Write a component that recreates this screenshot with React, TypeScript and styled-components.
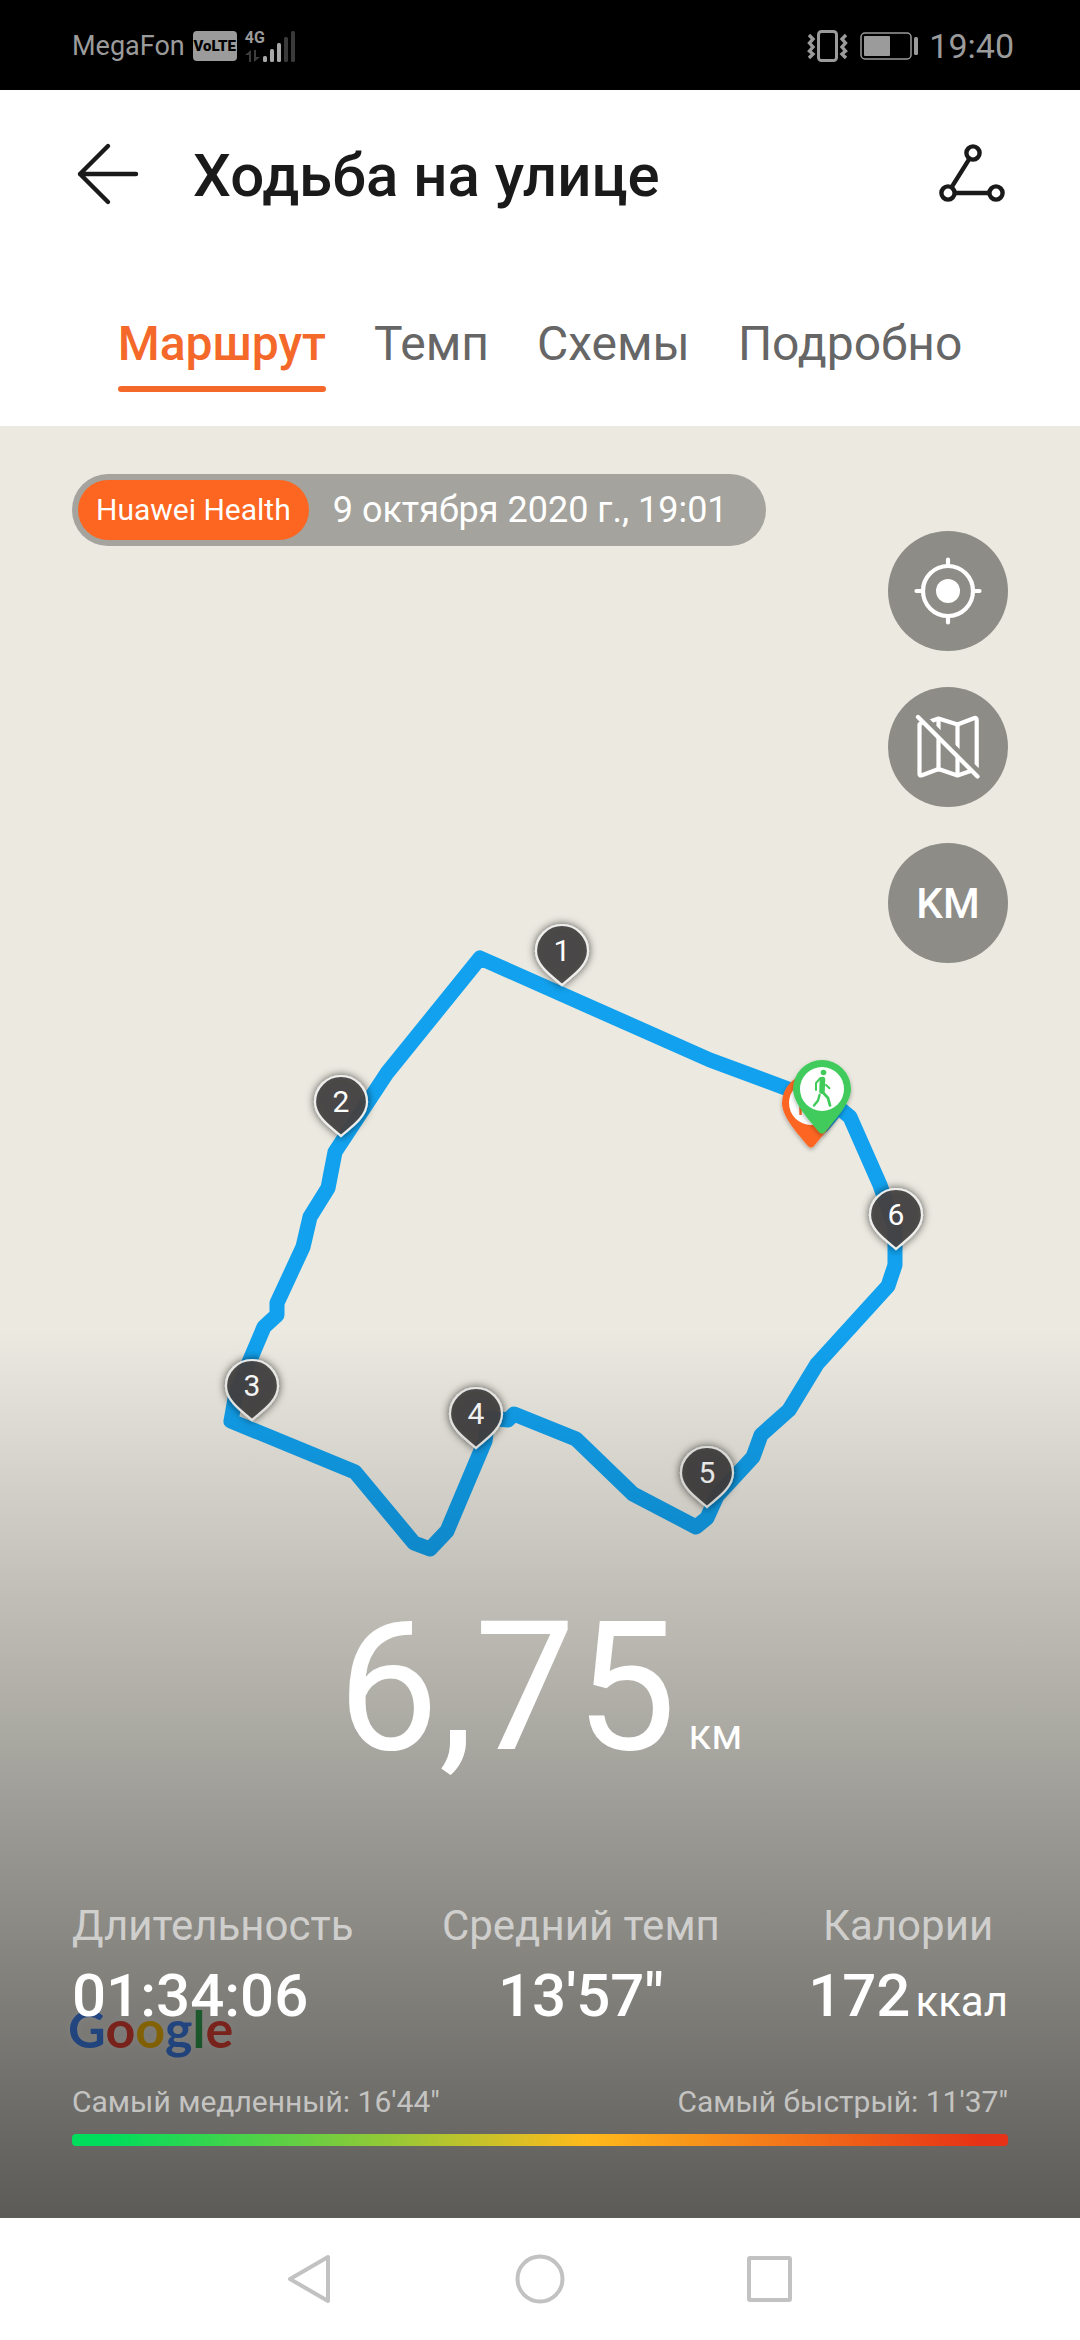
import React, { useState } from "react";
import styled, { createGlobalStyle } from "styled-components";

const GlobalStyle = createGlobalStyle`
  *, *::before, *::after { box-sizing: border-box; }
  body {
    margin: 0;
    background: #ffffff;
    font-family: Roboto, "Noto Sans", sans-serif;
  }
  button {
    border: 0;
    padding: 0;
    background: none;
    font: inherit;
    color: inherit;
    cursor: pointer;
  }
  svg { display: block; }
`;

const Screen = styled.div`
  display: flex;
  flex-direction: column;
  min-height: 100vh;
`;

/* Status bar */

const StatusBar = styled.div`
  display: flex;
  justify-content: space-between;
  align-items: center;
  height: 90px;
  padding: 2px 66px 0 72px;
  background: #000000;
  color: #9b9b9b;
`;

const StatusGroup = styled.div<{ $gap: number }>`
  display: flex;
  align-items: center;
  gap: ${(p) => p.$gap}px;
`;

const Carrier = styled.span`
  font-size: 27px;
  line-height: 32px;
`;

const VolteBadge = styled.span`
  display: flex;
  align-items: center;
  justify-content: center;
  width: 44px;
  height: 30px;
  border-radius: 4px;
  background: #9b9b9b;
  color: #000000;
  font-size: 15px;
  font-weight: 900;
`;

const Signal = styled.div`
  display: grid;
  grid-template-columns: 18px 32px;
  align-items: end;
  height: 32px;
`;

const Network = styled.div`
  display: flex;
  flex-direction: column;
  gap: 4px;
  font-size: 16px;
  font-weight: 700;
  line-height: 16px;
`;

const Clock = styled.span`
  font-size: 34px;
  line-height: 40px;
`;

/* Header */

const AppBar = styled.header`
  display: flex;
  align-items: center;
  gap: 49px;
  height: 168px;
  padding: 0 72px;
  color: #1a1a1a;
`;

const IconButton = styled.button`
  width: 72px;
  height: 72px;
`;

const Title = styled.h1`
  flex: 1;
  margin: 0;
  padding-top: 4px;
  font-size: 60px;
  line-height: 72px;
  font-weight: 500;
`;

const Tabs = styled.nav`
  display: flex;
  justify-content: center;
  gap: 48px;
  padding: 58px 48px 34px;
`;

const Tab = styled.button<{ $active: boolean }>`
  display: flex;
  flex-direction: column;
  gap: 14px;
  font-size: 48px;
  line-height: 56px;
  font-weight: ${(p) => (p.$active ? 500 : 400)};
  color: ${(p) => (p.$active ? "#f4692a" : "#666666")};

  &::after {
    content: "";
    width: 100%;
    height: 6px;
    border-radius: 3px;
    background: ${(p) => (p.$active ? "#f4692a" : "transparent")};
  }
`;

/* Map */

const MapArea = styled.main`
  position: relative;
  flex: 1;
  display: flex;
  flex-direction: column;
  justify-content: space-between;
  background: #ebe9e0;
  overflow: hidden;
`;

const MapLayer = styled.div`
  position: absolute;
  inset: 0;
`;

const RouteCanvas = styled.svg`
  width: 100%;
  height: 100%;
`;

const GoogleMark = styled.div`
  position: absolute;
  left: 68px;
  bottom: 158px;
  font-family: Lato, sans-serif;
  font-size: 52px;
  line-height: 64px;
  font-weight: 700;
  filter: drop-shadow(0 0 4px rgba(255, 255, 255, 0.6));
`;

const Letter = styled.span<{ $color: string }>`
  color: ${(p) => p.$color};
`;

const MapTop = styled.div`
  position: relative;
  display: flex;
  justify-content: space-between;
  align-items: flex-start;
  padding: 48px 72px 0;
`;

const SourceChip = styled.div`
  display: flex;
  align-items: center;
  gap: 24px;
  padding: 6px 38px 6px 6px;
  border-radius: 36px;
  background: #a4a39d;
  color: #ffffff;
  font-size: 36px;
  line-height: 42px;
`;

const Source = styled.span`
  padding: 0 18px;
  border-radius: 30px;
  background: #fc6620;
  font-size: 30px;
  line-height: 60px;
`;

const Controls = styled.div`
  display: flex;
  flex-direction: column;
  gap: 36px;
  padding-top: 57px;
`;

const RoundButton = styled.button`
  display: flex;
  align-items: center;
  justify-content: center;
  width: 120px;
  height: 120px;
  border-radius: 50%;
  background: #8d8c87;
  color: #ffffff;
  font-size: 42px;
  font-weight: 500;
`;

/* Summary */

const Summary = styled.section`
  position: relative;
  display: flex;
  flex-direction: column;
  padding: 250px 72px 72px;
  background: linear-gradient(rgba(0, 0, 0, 0), rgba(0, 0, 0, 0.61));
  color: #ffffff;
`;

const Distance = styled.div`
  display: flex;
  justify-content: center;
  align-items: baseline;
  gap: 12px;
  margin-bottom: 106px;
  font-size: 180px;
  line-height: 216px;
`;

const Unit = styled.span`
  font-size: 42px;
  line-height: 48px;
  font-weight: 400;
`;

const Stats = styled.dl`
  display: flex;
  justify-content: space-between;
  margin: 0 0 52px;
`;

const Stat = styled.div<{ $align: string }>`
  display: flex;
  flex-direction: column;
  gap: 10px;
  align-items: ${(p) => p.$align};
`;

const StatLabel = styled.dt`
  color: rgba(255, 255, 255, 0.6);
  font-size: 42px;
  line-height: 48px;
`;

const StatValue = styled.dd`
  display: flex;
  align-items: baseline;
  gap: 5px;
  margin: 0;
  font-size: 60px;
  line-height: 72px;
  font-weight: 500;
`;

const PaceRange = styled.div`
  display: flex;
  justify-content: space-between;
  margin-bottom: 14px;
  color: rgba(255, 255, 255, 0.6);
  font-size: 30px;
  line-height: 36px;
`;

const PaceBar = styled.div`
  height: 12px;
  border-radius: 4px;
  background: linear-gradient(90deg, #00dc5c 4%, #ffba1c 55%, #e63216 97%);
`;

/* Navigation bar */

const NavBar = styled.footer`
  display: flex;
  justify-content: center;
  align-items: center;
  gap: 180px;
  height: 122px;
  background: #ffffff;
`;

const NavButton = styled.button`
  width: 50px;
  height: 50px;
`;

const ROUTE =
  "M822 1126 L838 1107 L850 1117 L880 1185 L895 1228 L895 1265 L888 1286 L817 1364 L789 1410 L761 1435 L753 1457 L717 1496 L707 1518 L696 1527 L633 1494 L576 1439 L514 1414 L508 1420 L488 1418 L485 1441 L447 1531 L430 1549 L414 1543 L355 1472 L231 1421 L236 1393 L250 1360 L264 1327 L277 1315 L277 1303 L303 1247 L310 1217 L328 1188 L335 1152 L387 1073 L480 958 L710 1060 L815 1099";

const SPLITS = [
  { km: 1, x: 562, y: 951 },
  { km: 2, x: 341, y: 1102 },
  { km: 3, x: 252, y: 1386 },
  { km: 4, x: 476, y: 1414 },
  { km: 5, x: 707, y: 1473 },
  { km: 6, x: 896, y: 1215 },
];

const TABS = ["Маршрут", "Темп", "Схемы", "Подробно"];

const GOOGLE: [string, string][] = [
  ["G", "#4285f4"],
  ["o", "#ea4335"],
  ["o", "#fbbc05"],
  ["g", "#4285f4"],
  ["l", "#34a853"],
  ["e", "#ea4335"],
];

function SplitPin({ km, x, y }: { km: number; x: number; y: number }) {
  return (
    <g transform={`translate(${x} ${y})`}>
      <path
        d="M0 34 C-7 27 -26 16 -26 0 A26 26 0 0 1 26 0 C26 16 7 27 0 34 Z"
        fill="#464442"
        fillOpacity="0.9"
        stroke="#eeeeec"
        strokeWidth="2.2"
        filter="url(#pin-shadow)"
      />
      <text y="10" textAnchor="middle" fontSize="30" fill="#ffffff">
        {km}
      </text>
    </g>
  );
}

function WalkPin({ x, y, color }: { x: number; y: number; color: string }) {
  return (
    <g transform={`translate(${x} ${y})`}>
      <path
        d="M-3 43 C-10 34 -29 15 -29 0 A29 29 0 0 1 29 0 C29 15 10 34 3 43 Q0 46 -3 43 Z"
        fill={color}
        filter="url(#soft-shadow)"
      />
      <circle r="22" fill="#ffffff" />
      <circle cx="1.5" cy="-16.5" r="2.8" fill={color} />
      <g fill="none" stroke={color} strokeLinecap="round" strokeLinejoin="round">
        <path d="M0.5 -9.5 L0 2" strokeWidth="5.6" />
        <path d="M-1.5 -11 L-6 -6 L-6 1" strokeWidth="2" />
        <path d="M4 -4 L7.5 -0.8" strokeWidth="2" />
        <path d="M0.5 3 L6 9 L8 16.5" strokeWidth="2.8" />
        <path d="M-2.5 6 L-4 11.5 L-8 16.5" strokeWidth="2.4" />
      </g>
    </g>
  );
}

function FinishPin({ x, y }: { x: number; y: number }) {
  return (
    <g transform={`translate(${x} ${y})`}>
      <path
        d="M-3 43 C-10 34 -29 15 -29 0 A29 29 0 0 1 29 0 C29 15 10 34 3 43 Q0 46 -3 43 Z"
        fill="#fc6620"
        filter="url(#soft-shadow)"
      />
      <circle r="22" fill="#ffffff" />
      <path d="M-10.500 -10 V12" stroke="#fc6620" strokeWidth="2.400" />
    </g>
  );
}

export default function App() {
  const [active, setActive] = useState(TABS[0]);

  return (
    <>
      <GlobalStyle />
      <Screen>
        <StatusBar>
          <StatusGroup $gap={8}>
            <Carrier>MegaFon</Carrier>
            <VolteBadge>VoLTE</VolteBadge>
            <Signal>
              <Network>
                <span>4G</span>
                <svg width="16" height="12" viewBox="0 0 16 12" fill="#3d3d3d">
                  <path d="M6 0 V12 H4 V5 H0 Z M9 0 V12 L15 7 H11 V0 Z" />
                </svg>
              </Network>
              <svg width="32" height="32" viewBox="0 0 32 32">
                <g fill="#a8a8a8">
                  <rect x="0" y="26" width="4" height="6" rx="1.5" />
                  <rect x="7" y="19" width="4" height="13" rx="1.5" />
                  <rect x="14" y="13" width="4" height="19" rx="1.5" />
                </g>
                <g fill="#3a3a3a">
                  <rect x="21" y="7" width="4" height="25" rx="1.5" />
                  <rect x="28" y="1" width="4" height="31" rx="1.5" />
                </g>
              </svg>
            </Signal>
          </StatusGroup>
          <StatusGroup $gap={11}>
            <svg width="42" height="34" viewBox="0 0 42 34" fill="none" stroke="#9b9b9b" strokeWidth="3">
              <rect x="11.5" y="2.5" width="18" height="29" rx="3" />
              <path d="M2 6 L6 10 L2.5 14 L6 18 L2.5 22 L6 25 L2 29" strokeWidth="3.4" />
              <path d="M39 6 L35 10 L38.500 14 L35 18 L38.500 22 L35 25 L39 29" strokeWidth="3.4" />
            </svg>
            <svg width="58" height="28" viewBox="0 0 58 28">
              <rect x="1" y="1" width="50" height="26" rx="4" fill="none" stroke="#9b9b9b" strokeWidth="1.5" />
              <rect x="4" y="4" width="26" height="20" rx="1" fill="#9b9b9b" />
              <rect x="54" y="5" width="4" height="18" rx="1.500" fill="#9b9b9b" />
            </svg>
            <Clock>19:40</Clock>
          </StatusGroup>
        </StatusBar>

        <AppBar>
          <IconButton aria-label="Назад">
            <svg
              width="72"
              height="72"
              viewBox="0 0 72 72"
              fill="none"
              stroke="currentColor"
              strokeWidth="4.400"
              strokeLinecap="round"
              strokeLinejoin="round"
            >
              <path d="M36 8 L8 36 L36 64 M8 36 H64" />
            </svg>
          </IconButton>
          <Title>Ходьба на улице</Title>
          <IconButton aria-label="Поделиться">
            <svg width="72" height="72" viewBox="0 0 72 72" fill="none" stroke="currentColor" strokeWidth="4.400">
              <circle cx="37" cy="15" r="6.600" />
              <circle cx="12" cy="55" r="6.600" />
              <circle cx="60" cy="55" r="6.600" />
              <path d="M33.500 20.600 L15.500 49.400 M18.600 55 H53.400" />
            </svg>
          </IconButton>
        </AppBar>

        <Tabs>
          {TABS.map((name) => (
            <Tab key={name} $active={name === active} onClick={() => setActive(name)}>
              {name}
            </Tab>
          ))}
        </Tabs>

        <MapArea>
          <MapLayer>
            <RouteCanvas viewBox="0 426 1080 1792" preserveAspectRatio="xMidYMin meet">
              <defs>
                <filter id="pin-shadow" x="-40%" y="-40%" width="180%" height="180%">
                  <feDropShadow dx="0" dy="0" stdDeviation="4" floodColor="#000000" floodOpacity="0.7" />
                </filter>
                <filter id="soft-shadow" x="-30%" y="-30%" width="160%" height="160%">
                  <feDropShadow dx="0" dy="2" stdDeviation="2" floodColor="#000000" floodOpacity="0.3" />
                </filter>
              </defs>
              <path
                d={ROUTE}
                fill="none"
                stroke="#11a1ee"
                strokeWidth="15"
                strokeLinecap="round"
                strokeLinejoin="round"
              />
              {SPLITS.map((s) => (
                <SplitPin key={s.km} {...s} />
              ))}
              <FinishPin x={811} y={1103} />
              <WalkPin x={822} y={1089} color="#41cb5b" />
            </RouteCanvas>
            <GoogleMark>
              {GOOGLE.map(([letter, color], i) => (
                <Letter key={i} $color={color}>
                  {letter}
                </Letter>
              ))}
            </GoogleMark>
          </MapLayer>

          <MapTop>
            <SourceChip>
              <Source>Huawei Health</Source>
              <span>9 октября 2020 г., 19:01</span>
            </SourceChip>
            <Controls>
              <RoundButton aria-label="Моё местоположение">
                <svg
                  width="120"
                  height="120"
                  viewBox="0 0 120 120"
                  fill="none"
                  stroke="#ffffff"
                  strokeWidth="4.200"
                  strokeLinecap="round"
                >
                  <circle cx="60" cy="60" r="25" />
                  <circle cx="60" cy="60" r="12" fill="#ffffff" stroke="none" />
                  <path d="M60 28.500 V34 M60 86 V91.500 M28.500 60 H34 M86 60 H91.500" />
                </svg>
              </RoundButton>
              <RoundButton aria-label="Скрыть карту">
                <svg
                  width="120"
                  height="120"
                  viewBox="0 0 120 120"
                  fill="none"
                  stroke="#ffffff"
                  strokeWidth="4.200"
                  strokeLinecap="round"
                  strokeLinejoin="round"
                >
                  <path d="M34 35.500 L31.500 37.500 V87 Q31.500 89 34 88.300 L50.500 82 L69.500 88.500 L84 83.500" />
                  <path d="M42 34.500 L50.500 31.500 L69.500 37.500 L86.500 31 Q88.700 30.500 88.700 33 V80" />
                  <path d="M50.500 32 V82 M69.500 38 V88" />
                  <path d="M35 29 L94 88" stroke="#8d8c87" strokeWidth="5" />
                  <path d="M30 30 L89.500 89.500" />
                </svg>
              </RoundButton>
              <RoundButton>KM</RoundButton>
            </Controls>
          </MapTop>

          <Summary>
            <Distance>
              <span>6,75</span>
              <Unit>км</Unit>
            </Distance>
            <Stats>
              <Stat $align="flex-start">
                <StatLabel>Длительность</StatLabel>
                <StatValue>01:34:06</StatValue>
              </Stat>
              <Stat $align="center">
                <StatLabel>Средний темп</StatLabel>
                <StatValue>13'57"</StatValue>
              </Stat>
              <Stat $align="center">
                <StatLabel>Калории</StatLabel>
                <StatValue>
                  172<Unit>ккал</Unit>
                </StatValue>
              </Stat>
            </Stats>
            <PaceRange>
              <span>Самый медленный: 16'44"</span>
              <span>Самый быстрый: 11'37"</span>
            </PaceRange>
            <PaceBar />
          </Summary>
        </MapArea>

        <NavBar>
          <NavButton aria-label="Назад">
            <svg width="50" height="50" viewBox="0 0 50 50" fill="none" stroke="#c2c2c2" strokeWidth="4" strokeLinejoin="round">
              <path d="M43 3 V47 L5 25 Z" />
            </svg>
          </NavButton>
          <NavButton aria-label="Домой">
            <svg width="50" height="50" viewBox="0 0 50 50" fill="none" stroke="#c2c2c2" strokeWidth="4">
              <circle cx="25" cy="25" r="22.500" />
            </svg>
          </NavButton>
          <NavButton aria-label="Недавние">
            <svg width="50" height="50" viewBox="0 0 50 50" fill="none" stroke="#c2c2c2" strokeWidth="4" strokeLinejoin="round">
              <rect x="4" y="4" width="41" height="42" rx="1" />
            </svg>
          </NavButton>
        </NavBar>
      </Screen>
    </>
  );
}
